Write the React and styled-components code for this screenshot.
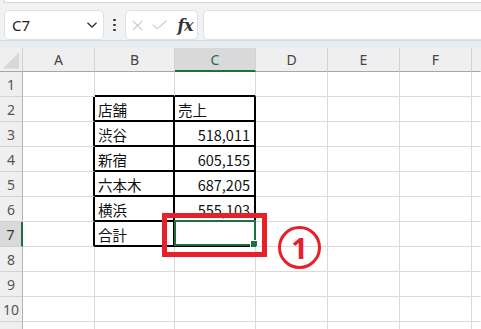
import React from 'react';
import styled, { createGlobalStyle } from 'styled-components';

const GlobalStyle = createGlobalStyle`
  html, body {
    margin: 0;
    padding: 0;
    background: #ffffff;
    overflow: hidden;
  }
`;

const COLUMNS = ['A', 'B', 'C', 'D', 'E', 'F', 'G'];
const GRID = '#dadada';
const BLACK = '#000000';
const GREEN = '#1e6e42';
const RED = '#e8202a';

// sheet content, keyed by row then column
const data = {
  2: { B: '店舗', C: '売上' },
  3: { B: '渋谷', C: '518,011' },
  4: { B: '新宿', C: '605,155' },
  5: { B: '六本木', C: '687,205' },
  6: { B: '横浜', C: '555,103' },
  7: { B: '合計' },
};

const isNumber = (v) => /^[\d,]+$/.test(v || '');

const App = () => {
  const rows = Array.from({ length: 11 }, (_, i) => i + 1);

  return (
    <>
      <GlobalStyle />
      <Page>
        <TopStrip />
        <FormulaBar>
          <NameBox>
            <NameText>C7</NameText>
            <svg width="12" height="8" viewBox="0 0 12 8">
              <path d="M1.5 1.8 L6 6 L10.5 1.8" fill="none" stroke="#333" strokeWidth="1.3" />
            </svg>
          </NameBox>
          <Kebab>
            <Dot />
            <Dot />
            <Dot />
          </Kebab>
          <FxBox>
            <svg width="13" height="13" viewBox="0 0 13 13">
              <path d="M1 1 L12 12 M12 1 L1 12" stroke="#c4c4c4" strokeWidth="1.2" />
            </svg>
            <svg width="18" height="12" viewBox="0 0 18 12">
              <path d="M1 5.5 L6 10.5 L17 1" fill="none" stroke="#c4c4c4" strokeWidth="1.2" />
            </svg>
            <FxText>fx</FxText>
          </FxBox>
          <FormulaInput />
        </FormulaBar>
        <Band />

        <Sheet>
          <Corner>
            <svg width="23" height="24" viewBox="0 0 23 24">
              <path d="M3 21 L20 21 L20 4 Z" fill="#d8d8d8" />
            </svg>
          </Corner>
          {COLUMNS.map((col) => (
            <ColHeader key={col} $active={col === 'C'} $last={col === 'G'}>
              {col !== 'G' && col}
            </ColHeader>
          ))}

          {rows.map((r) => (
            <React.Fragment key={r}>
              {/* row 11 only peeks in at the bottom edge, its number is below the fold */}
              <RowHeader $active={r === 7}>{r <= 10 && r}</RowHeader>
              {COLUMNS.map((col) => {
                const value = data[r] && data[r][col];
                const framedRight = r >= 2 && r <= 7 && ['A', 'B', 'C'].includes(col);
                const framedBottom = r >= 1 && r <= 7 && ['B', 'C'].includes(col);
                return (
                  <Cell
                    key={col}
                    $right={col === 'G' ? 'transparent' : framedRight ? BLACK : GRID}
                    $rightW={framedRight ? 2 : 1}
                    $bottom={framedBottom ? BLACK : GRID}
                    $bottomW={framedBottom ? 2 : 1}
                    $align={isNumber(value) ? 'flex-end' : 'flex-start'}
                  >
                    {value}
                    {r === 7 && col === 'C' && (
                      <Selection>
                        <Handle />
                      </Selection>
                    )}
                  </Cell>
                );
              })}
            </React.Fragment>
          ))}
        </Sheet>

        <Callout />
        <StepBadge>1</StepBadge>
      </Page>
    </>
  );
};

export default App;

const Page = styled.div`
  position: relative;
  width: 481px;
  height: 329px;
  overflow: hidden;
  background: #f1f2f3;
  display: flex;
  flex-direction: column;

  & > * {
    flex-shrink: 0;
  }
`;

const TopStrip = styled.div`
  height: 2px;
  margin-left: 3px;
  background: #ffffff;
  border-bottom: 1px solid #d6d6d6;
  border-left: 1px solid #d6d6d6;
  border-bottom-left-radius: 4px;
`;

const FormulaBar = styled.div`
  display: flex;
  align-items: center;
  padding: 7px 0 0 4px;
  height: 30px;
`;

const NameBox = styled.div`
  box-sizing: border-box;
  width: 100px;
  height: 30px;
  background: #ffffff;
  border: 1px solid #e0e0e0;
  border-radius: 5px;
  display: flex;
  align-items: center;
  justify-content: space-between;
  padding: 0 5px 0 7px;
`;

const NameText = styled.span`
  font-family: "Noto Sans", "Open Sans", sans-serif;
  font-size: 15px;
  color: #222;
`;

const Kebab = styled.div`
  width: 21px;
  display: flex;
  flex-direction: column;
  align-items: center;
  gap: 2.5px;
`;

const Dot = styled.span`
  width: 2.5px;
  height: 2.5px;
  background: #333;
  border-radius: 1px;
`;

const FxBox = styled.div`
  box-sizing: border-box;
  width: 73px;
  height: 30px;
  background: #ffffff;
  border: 1px solid #e0e0e0;
  border-radius: 5px;
  display: flex;
  align-items: center;
  padding: 0 4px 0 6px;
  gap: 9px;
`;

const FxText = styled.span`
  font-family: "DejaVu Serif", "Liberation Serif", serif;
  font-style: italic;
  font-weight: bold;
  font-size: 16px;
  color: #333;
  margin-left: 1px;
  letter-spacing: -0.5px;
`;

const FormulaInput = styled.div`
  flex: 1;
  height: 30px;
  margin-left: 5px;
  box-sizing: border-box;
  background: #ffffff;
  border: 1px solid #e0e0e0;
  border-right: none;
  border-radius: 5px 0 0 5px;
`;

const Band = styled.div`
  height: 8px;
  background: #e9ecef;
  border-top: 1px solid #d8dbde;
  box-sizing: border-box;
`;

const Sheet = styled.div`
  display: grid;
  grid-template-columns: 23px 72px 80px 81px 72px 72px 72px 1fr;
  grid-template-rows: 24px;
  grid-auto-rows: 25px;
  background: #ffffff;
`;

const Corner = styled.div`
  background: #efefef;
  border-bottom: 1px solid #a6a6a6;
  border-right: 1px solid #cfcfcf;
  box-sizing: border-box;
  display: flex;
`;

const ColHeader = styled.div`
  box-sizing: border-box;
  background: ${(p) => (p.$active ? '#d9d9d9' : '#efefef')};
  border-right: 1px solid ${(p) => (p.$last ? 'transparent' : '#d2d2d2')};
  border-bottom: ${(p) => (p.$active ? `2px solid ${GREEN}` : '1px solid #a6a6a6')};
  display: flex;
  align-items: center;
  justify-content: center;
  font-family: "Noto Sans", "Open Sans", sans-serif;
  font-size: 14px;
  color: ${(p) => (p.$active ? GREEN : '#444')};
`;

const RowHeader = styled.div`
  box-sizing: border-box;
  background: ${(p) => (p.$active ? '#d9d9d9' : '#efefef')};
  border-right: ${(p) => (p.$active ? `2px solid ${GREEN}` : '1px solid #b4b4b4')};
  border-bottom: 1px solid #d2d2d2;
  display: flex;
  align-items: center;
  justify-content: center;
  font-family: "Noto Sans", "Open Sans", sans-serif;
  font-size: 14px;
  color: ${(p) => (p.$active ? '#333' : '#555')};
`;

const Cell = styled.div`
  position: relative;
  box-sizing: border-box;
  border-right: ${(p) => p.$rightW}px solid ${(p) => p.$right};
  border-bottom: ${(p) => p.$bottomW}px solid ${(p) => p.$bottom};
  display: flex;
  align-items: center;
  justify-content: ${(p) => p.$align};
  padding: 1px 4px 0 3px;
  font-family: "Noto Sans CJK JP", "Noto Sans", sans-serif;
  font-size: 14.5px;
  color: #111;
  white-space: nowrap;
`;

const Selection = styled.div`
  position: absolute;
  left: -1px;
  top: -2px;
  right: -2px;
  bottom: -1px;
  border: 2px solid ${GREEN};
`;

const Handle = styled.div`
  position: absolute;
  right: -4px;
  bottom: -4px;
  width: 6px;
  height: 6px;
  background: ${GREEN};
  border: 1px solid #ffffff;
`;

const Callout = styled.div`
  position: absolute;
  left: 162px;
  top: 213px;
  width: 105px;
  height: 44px;
  box-sizing: border-box;
  border: 5px solid ${RED};
`;

const StepBadge = styled.div`
  position: absolute;
  left: 278px;
  top: 226px;
  width: 43px;
  height: 43px;
  box-sizing: border-box;
  border: 3px solid ${RED};
  border-radius: 50%;
  display: flex;
  align-items: center;
  justify-content: center;
  font-family: "Noto Sans", "Open Sans", sans-serif;
  font-weight: bold;
  font-size: 29px;
  line-height: 1;
  color: ${RED};
  padding-bottom: 1px;
`;
